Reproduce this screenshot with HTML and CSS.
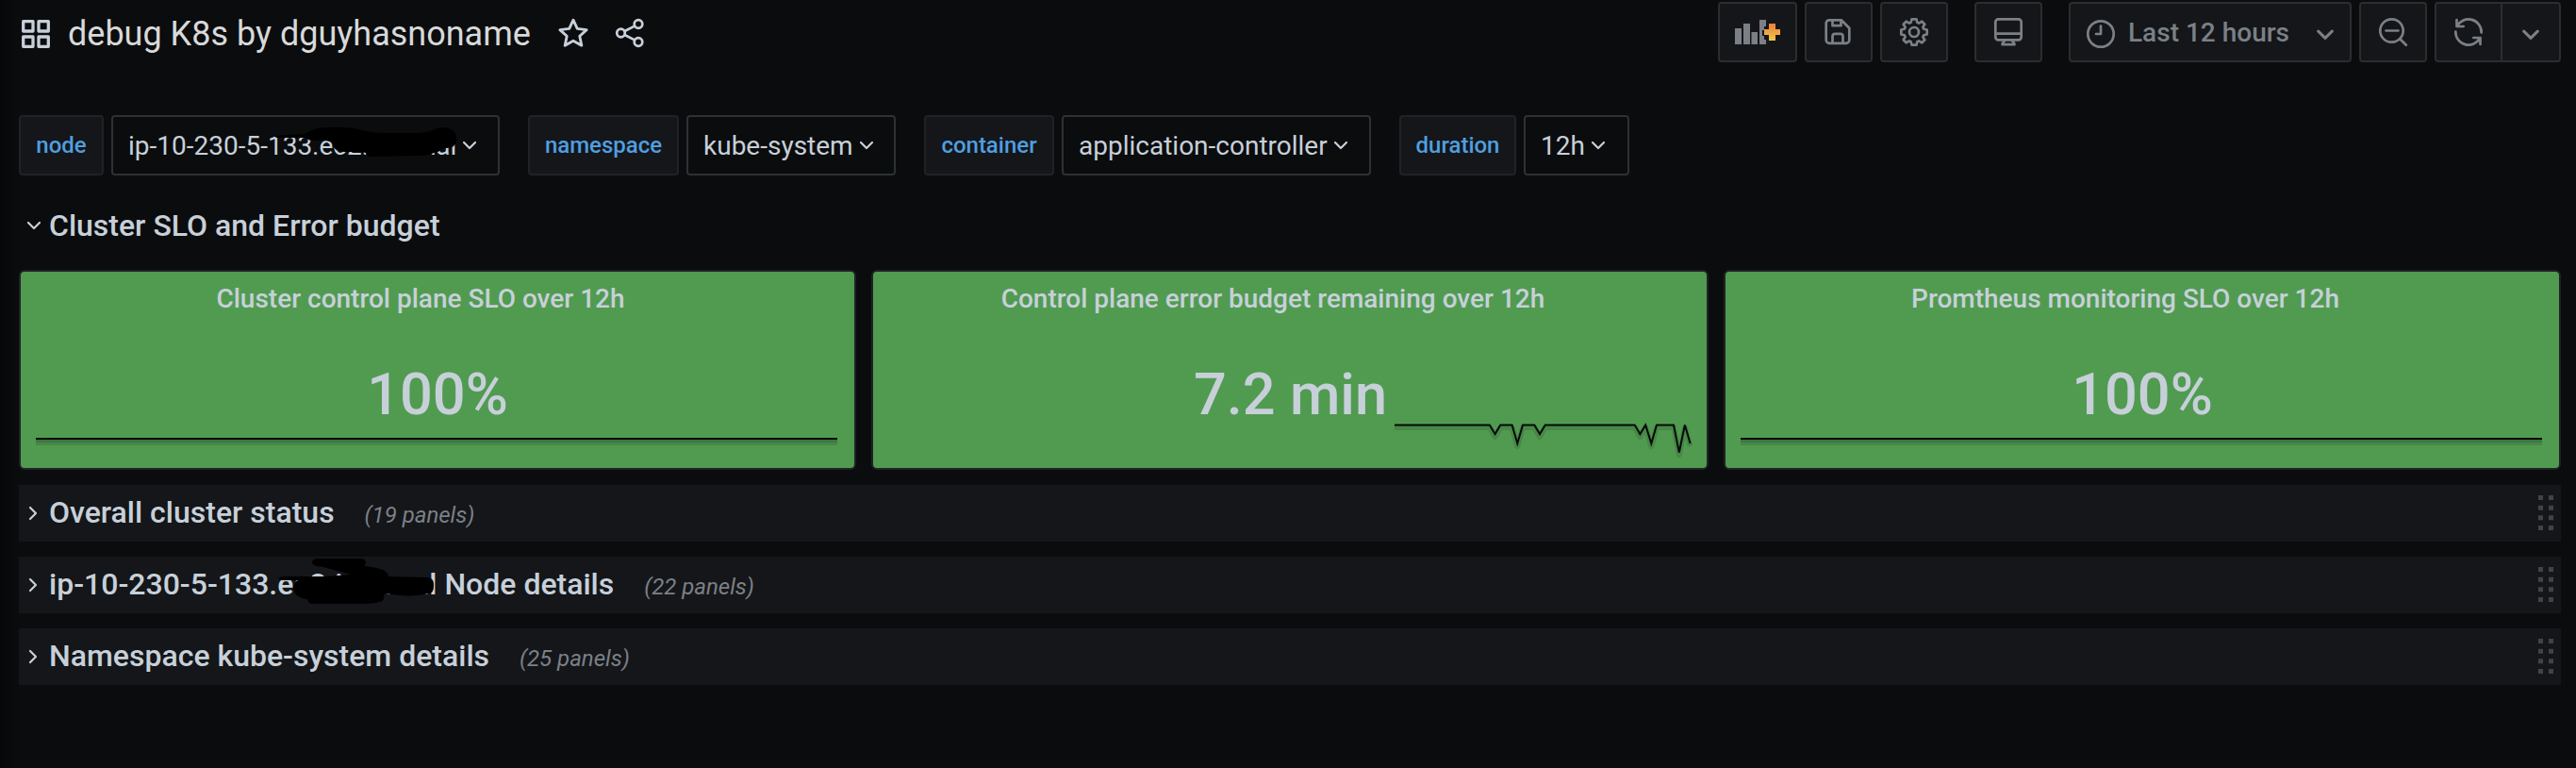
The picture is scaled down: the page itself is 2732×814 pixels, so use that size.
FILE: index.html
```html
<!DOCTYPE html>
<html lang="en">
<head>
<meta charset="utf-8">
<title>debug K8s by dguyhasnoname</title>
<link rel="stylesheet" href="styles.css">
</head>
<body>
<header class="navbar">
  <div class="heading">
    <svg class="apps" viewBox="0 0 30 30"><path d="M1.700 1.700h10.300v10.300h-10.300zM18 1.700h10.300v10.300h-10.300zM1.700 18h10.300v10.300h-10.300zM18 18h10.300v10.300h-10.300z"/></svg>
    <h1 class="title">debug K8s by dguyhasnoname</h1>
    <svg class="star" viewBox="0 0 32 32"><path d="M16 3l4 8.700 9.300 1.100-6.900 6.300 1.900 9.300L16 23.700l-8.300 4.700 1.900-9.300-6.900-6.300 9.300-1.100z"/></svg>
    <svg class="share" viewBox="0 0 32 32"><circle cx="25" cy="6.500" r="4.300"/><circle cx="6.500" cy="16" r="4.300"/><circle cx="25" cy="25.500" r="4.300"/><path d="M10.500 14l10.500-5.400M10.500 18l10.500 5.400"/></svg>
  </div>
  <div class="toolbar">
    <button class="tool add"><svg class="icon-add" viewBox="0 0 48 28"><path class="bars" d="M0 10h7v17H0zM9 5h7v22H9zM17.500 14h6.500v13h-6.500zM26 1h7v7h-2v4h-2v6h2v4h2v5h-7z"/><path class="plus" d="M36 5h7v6h5v6h-5v6h-7v-6h-5v-6h5z"/><defs><linearGradient id="warm" x2="0" y2="1"><stop stop-color="#e8803c"/><stop offset="1" stop-color="#f2c746"/></linearGradient></defs></svg></button>
    <button class="tool"><svg class="icon" viewBox="0 0 32 32"><path d="M5.500 3.300h13.300l8.500 8.500v12.700a3.300 3.300 0 0 1-3.300 3.300H6a3.300 3.300 0 0 1-3.300-3.300V6.600a3.300 3.300 0 0 1 3.300-3.300zM9.500 3.500v5.700h9V3.500M9.500 27.500v-7a2.700 2.700 0 0 1 2.700-2.700h5.600a2.700 2.700 0 0 1 2.700 2.700v7"/></svg></button>
    <button class="tool"><svg class="icon" viewBox="0 0 32 32"><circle cx="16" cy="16" r="5"/><path d="M13.500 2.300h5l.8 3.500 1.900.8 3.100-1.900 3 3-1.900 3.100.8 1.900 3.500.8v5l-3.500.8-.8 1.900 1.900 3.100-3 3-3.100-1.900-1.900.8-.8 3.500h-5l-.8-3.500-1.900-.8-3.100 1.900-3-3 1.900-3.100-.8-1.900-3.500-.8v-5l3.500-.8.8-1.900-1.900-3.100 3-3 3.100 1.900 1.900-.8z"/></svg></button>
    <button class="tool monitor"><svg class="icon" viewBox="0 0 32 32"><rect x="2.300" y="2.300" width="27.400" height="22" rx="3"/><path d="M2.500 17.700h27M12 24.500c0 2-2.500 2-2.500 4.700h13c0-2.700-2.500-2.700-2.500-4.700"/></svg></button>
    <button class="tool time"><svg class="clock" viewBox="0 0 32 32"><circle cx="16" cy="16" r="13.700"/><path d="M16 7.500V16h-5"/></svg><span class="range">Last 12 hours</span><svg class="caret" viewBox="0 0 16 10"><path d="M1.500 1.500L8 8l6.500-6.500"/></svg></button>
    <button class="tool"><svg class="icon" viewBox="0 0 32 32"><circle cx="14.500" cy="14.500" r="12.200"/><path d="M8.500 14.500h13M23.300 23.300l6.500 6.500"/></svg></button>
    <div class="split">
      <button class="tool refresh"><svg class="icon" viewBox="0 0 32 32"><path d="M3.500 3v7h7.200M4 9.500A13.700 13.700 0 0 1 29.700 16.500M2.300 15.500A13.700 13.700 0 0 0 28 22.500M28.500 29v-7h-7.200"/></svg></button>
      <button class="tool more"><svg class="caret" viewBox="0 0 16 10"><path d="M1.500 1.500L8 8l6.500-6.500"/></svg></button>
    </div>
  </div>
</header>

<section class="variables">
  <div class="variable"><label class="name w-node">node</label><div class="value v-node">ip-10-230-5-133.ec2.internal<svg class="chev" viewBox="0 0 14 10"><path d="M1 2l6 6 6-6"/></svg>
    <svg class="redact redact-value" viewBox="270 120 270 70"><path d="M291 144L323 142C333 136 340 135 347 135H365C382 136 390 141 407 141H445C458 140 462 135 470 135C479 135 484 140 484 146C485 154 480 157 473 157C468 157 466 162 460 162C455 165 445 165 440 165L392 166C387 165 390 161 384 161H366C357 161 353 157 353 152C350 148 340 149 332 149C326 149 326 146 320 146H293z"/></svg></div></div>
  <div class="variable"><label class="name w-ns">namespace</label><div class="value v-ns">kube-system<svg class="chev" viewBox="0 0 14 10"><path d="M1 2l6 6 6-6"/></svg></div></div>
  <div class="variable"><label class="name w-ct">container</label><div class="value v-ct">application-controller<svg class="chev" viewBox="0 0 14 10"><path d="M1 2l6 6 6-6"/></svg></div></div>
  <div class="variable"><label class="name w-du">duration</label><div class="value v-du">12h<svg class="chev" viewBox="0 0 14 10"><path d="M1 2l6 6 6-6"/></svg></div></div>
</section>

<main>
  <div class="row-open"><svg class="chev" viewBox="0 0 14 10"><path d="M1 2l6 6 6-6"/></svg><h2 class="row-title">Cluster SLO and Error budget</h2></div>
  <div class="panels">
    <article class="panel"><h3 class="panel-title">Cluster control plane SLO over 12h</h3><div class="stat">100%</div><svg class="flat" viewBox="0 0 850 14"><path class="shade" d="M0 5h850"/><path class="shade near" d="M0 3.500h850"/><path class="line" d="M0 1h850"/></svg></article>
    <article class="panel"><h3 class="panel-title">Control plane error budget remaining over 12h</h3><div class="split-stat"><div class="stat">7.2 min</div><svg class="spark" viewBox="0 0 316 40"><path class="shade" d="M0 6H100.800l5.800 10 5.700-10h12.300l5.700 20 5.700-20h12.300l5.700 10 5.800-10h94.900l5.700 10 5.800-10 6.100 20 5.700-20h18l5.800 29 6.100-29 5.700 20"/><path class="line" d="M0 3.500H100.800l5.800 9.500 5.700-9.500h12.300l5.700 19.500 5.700-19.500h12.300l5.700 9.500 5.800-9.500h94.900l5.700 9.500 5.800-9.500 6.100 19.500 5.700-19.500h18l5.800 29 6.100-29 5.700 19.500"/></svg></div></article>
    <article class="panel"><h3 class="panel-title">Promtheus monitoring SLO over 12h</h3><div class="stat">100%</div><svg class="flat" viewBox="0 0 850 14"><path class="shade" d="M0 5h850"/><path class="shade near" d="M0 3.500h850"/><path class="line" d="M0 1h850"/></svg></article>
  </div>
  <div class="row"><svg class="arrow" viewBox="0 0 10 16"><path d="M2 2l6 6-6 6"/></svg><h2 class="row-title">Overall cluster status</h2><span class="count">(19 panels)</span><svg class="grip" viewBox="0 0 16 38"><path d="M2.500 0v38M13.500 0v38"/></svg></div>
  <div class="row"><svg class="arrow" viewBox="0 0 10 16"><path d="M2 2l6 6-6 6"/></svg><h2 class="row-title">ip-10-230-5-133.ec2.internal Node details</h2><span class="count">(22 panels)</span><svg class="grip" viewBox="0 0 16 38"><path d="M2.500 0v38M13.500 0v38"/></svg>
    <svg class="redact redact-row" viewBox="280 590 200 60"><path d="M295 613C297 611 301 611 305 611H345L372 609L343 601C335 600 331 599 331 596C332 592 335 592 340 592H383C389 592 389 599 386 600C400 602 411 603 412 611L452 612C459 612 460 616 460 620C460 628 458 629 450 630C440 632 425 632 408 629C407 632 408 638 402 638C395 640 385 640 380 640H332C327 640 327 637 326 635C315 634 311 628 311 623C311 618 313 617 316 615H297z"/></svg></div>
  <div class="row"><svg class="arrow" viewBox="0 0 10 16"><path d="M2 2l6 6-6 6"/></svg><h2 class="row-title">Namespace kube-system details</h2><span class="count">(25 panels)</span><svg class="grip" viewBox="0 0 16 38"><path d="M2.500 0v38M13.500 0v38"/></svg></div>
</main>
</body>
</html>
```
FILE: styles.css
```css
* { box-sizing: border-box; }
body { margin: 0; height: 814px; overflow: hidden; background: #0b0c0e linear-gradient(90deg, #060708, #0b0c0e 22px); color: #c7d0d9; font-family: Roboto, "Liberation Sans", sans-serif; font-size: 28px; }
h1, h2, h3 { margin: 0; font-weight: 500; }
svg { display: block; flex: none; fill: none; stroke: currentColor; stroke-width: 2.7; stroke-linecap: round; stroke-linejoin: round; }
.navbar { display: flex; justify-content: space-between; height: 122px; padding: 2px 16px 0 23px; }
.heading { display: flex; align-items: center; height: 68px; }
.apps { width: 30px; height: 30px; stroke-width: 3.3; }
.title { margin-left: 19px; font-size: 36px; font-weight: 400; color: #d8d9da; white-space: nowrap; }
.star { width: 34px; height: 34px; margin: -3px 0 0 28px; }
.share { width: 32px; height: 32px; margin: -3px 0 0 27px; }
.toolbar { display: flex; gap: 8px; color: #7b8087; }
.tool { display: flex; align-items: center; justify-content: center; width: 72px; height: 64px; padding: 0; font: inherit; color: inherit; background: #141619; border: 2px solid #2c2d2f; border-radius: 4px; }
.add { width: 84px; }
.icon-add { width: 48px; height: 28px; stroke: none; }
.bars { fill: #7b8087; }
.plus { fill: url(#warm); }
.icon { width: 32px; height: 32px; }
.monitor { margin: 0 20px; }
.time { width: 300px; justify-content: flex-start; padding-left: 16px; }
.clock { width: 32px; height: 32px; margin-top: 4px; }
.range { width: 172px; margin-left: 13px; text-align: left; font-weight: 500; white-space: nowrap; }
.caret { width: 18px; height: 12px; margin-top: 6px; }
.time .caret { margin-left: 28px; }
.split { display: flex; }
.refresh { border-radius: 4px 0 0 4px; }
.more { width: 64px; margin-left: -2px; border-radius: 0 4px 4px 0; }
.variables { display: flex; gap: 30px; padding-left: 20px; }
.variable { display: flex; gap: 8px; }
.name, .value { display: flex; align-items: center; height: 64px; border: 2px solid #202226; border-radius: 4px; white-space: nowrap; }
.name { justify-content: center; background: #141619; color: #4f9fe0; font-size: 24px; font-weight: 500; }
.value { position: relative; padding-left: 16px; border-color: #2c3235; }
.w-node { width: 90px; } .w-ns { width: 160px; } .w-ct { width: 138px; } .w-du { width: 124px; }
.v-node { width: 412px; } .v-ns { width: 222px; } .v-ct { width: 328px; } .v-du { width: 112px; }
.chev { width: 14px; height: 10px; stroke-width: 2.2; }
.value .chev { margin-left: 7px; }
.redact { position: absolute; fill: #000; stroke: none; }
.redact-value { left: 150px; top: -4px; width: 270px; height: 70px; }
.redact-row { left: 260px; top: 0; width: 200px; height: 60px; }
main { padding: 0 16px 0 20px; }
.row-open { display: flex; align-items: center; height: 100px; padding: 6px 0 0 9px; }
.row-title { font-size: 32px; white-space: nowrap; }
.row-open .row-title { margin-left: 9px; }
.panels { display: grid; grid-template-columns: repeat(3, 888px); gap: 16px; margin-bottom: 16px; }
.panel { height: 212px; padding-top: 11px; border: 2px solid #202226; border-radius: 6px; background: #519b51; }
.panel-title { height: 36px; padding-right: 36px; line-height: 36px; font-size: 28px; text-align: center; }
.stat { height: 74px; margin-top: 46px; line-height: 74px; font-size: 61.3px; font-weight: 500; text-align: center; white-space: nowrap; }
.flat { width: 850px; height: 14px; margin: 9px 0 0 16px; }
.shade { stroke: #000; stroke-opacity: .12; stroke-width: 6; stroke-linecap: butt; }
.near { stroke-width: 3; }
.line { stroke: #050a08; stroke-width: 2; stroke-linecap: butt; stroke-linejoin: miter; }
.split-stat { display: flex; padding-left: 340px; }
.split-stat .stat { width: 204px; text-align: left; }
.spark { width: 316px; height: 40px; margin: 112px 0 0 9px; }
.row { position: relative; display: flex; align-items: center; height: 60px; margin-bottom: 16px; padding-left: 10px; background: #141619; }
.arrow { width: 10px; height: 16px; stroke-width: 2.2; }
.row .row-title { margin: -3px 0 0 12px; }
.count { margin: 4px 0 0 32px; font-size: 24px; font-style: italic; color: #7b8087; }
.grip { width: 16px; height: 38px; margin: -1px 8px 0 auto; stroke: #424345; stroke-width: 5; stroke-linecap: butt; stroke-dasharray: 5 5.67; }
```
